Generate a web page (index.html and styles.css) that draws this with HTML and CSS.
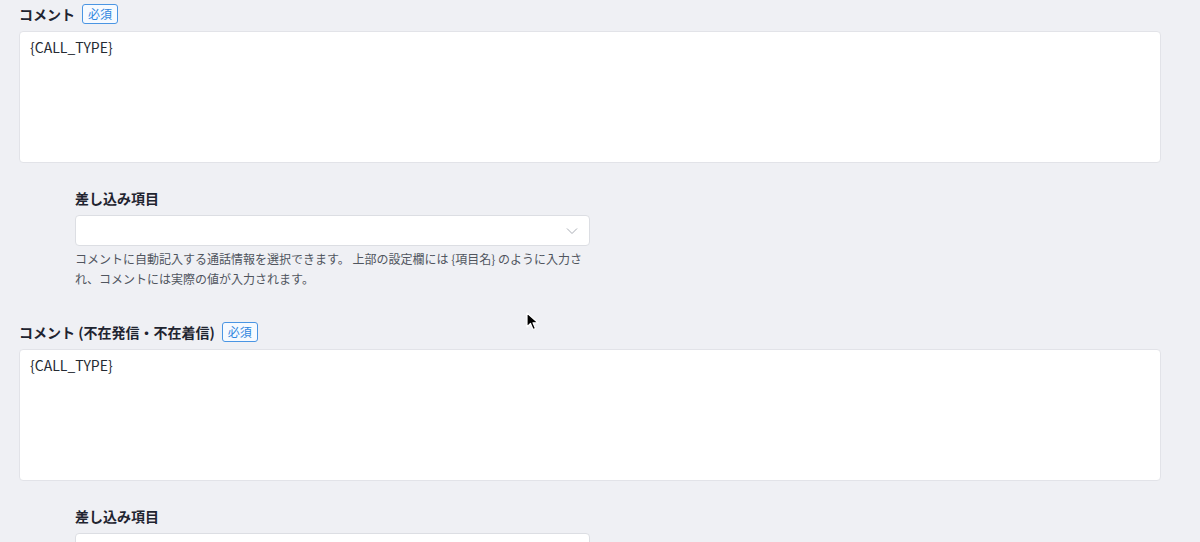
FILE: index.html
```html
<!DOCTYPE html>
<html>
  <head>
    <title>コメント設定</title>
    <link rel="stylesheet" href="styles.css">
  </head>
  <body>
    <div class="page">

      <div class="field">
        <div class="field_title">
          <span>コメント</span>
          <span class="badge">必須</span>
        </div>
        <div class="textarea">{CALL_TYPE}</div>
      </div>

      <div class="insert">
        <div class="insert_label">差し込み項目</div>
        <div class="select">
          <svg class="chevron" width="12" height="8" viewBox="0 0 12 8"><path d="M1 1.5 L6 6.5 L11 1.5" fill="none" stroke="#a9adb5" stroke-width="1"/></svg>
        </div>
        <p class="help">コメントに自動記入する通話情報を選択できます。 上部の設定欄には {項目名} のように入力され、コメントには実際の値が入力されます。</p>
      </div>

      <div class="field">
        <div class="field_title">
          <span>コメント (不在発信・不在着信)</span>
          <span class="badge">必須</span>
        </div>
        <div class="textarea">{CALL_TYPE}</div>
      </div>

      <div class="insert">
        <div class="insert_label">差し込み項目</div>
        <div class="select">
          <svg class="chevron" width="12" height="8" viewBox="0 0 12 8"><path d="M1 1.5 L6 6.5 L11 1.5" fill="none" stroke="#a9adb5" stroke-width="1"/></svg>
        </div>
      </div>

    </div>

    <!-- mouse pointer -->
    <svg class="pointer" width="14" height="20" viewBox="0 0 14 20">
      <path d="M1 1 L1 15 L4.5 11.5 L7 17.5 L9.5 16.5 L7 10.8 L12 10.8 Z" fill="#000" stroke="#fff" stroke-width="1.2" stroke-linejoin="round"/>
    </svg>
  </body>
</html>
```

FILE: styles.css
```css
* {
  padding: 0;
  margin: 0;
  box-sizing: border-box;
  font-family: "Noto Sans CJK JP", "Noto Sans", sans-serif;
}

body {
  background: #eff0f4;
  color: #1f2430;
  overflow: hidden;
}

.page {
  padding: 4px 39px 0 19px;
}

.field_title {
  display: flex;
  align-items: center;
  gap: 7px;
  height: 20px;
  font-size: 14px;
  font-weight: 700;
}

.badge {
  font-size: 12px;
  font-weight: 400;
  color: #2f86de;
  background: #f6faff;
  border: 1px solid #4a95e3;
  border-radius: 3px;
  padding: 0 5px;
  line-height: 18px;
}

.textarea {
  margin-top: 7px;
  height: 132px;
  background: #fff;
  border: 1px solid #e2e3e8;
  border-radius: 4px;
  padding: 5px 10px;
  font-size: 14px;
  line-height: 20px;
  color: #252a33;
}

.insert {
  margin: 25px 0 0 56px;
  width: 515px;
  padding-bottom: 33px;
}

.insert_label {
  font-size: 14px;
  font-weight: 700;
  line-height: 20px;
}

.select {
  margin-top: 7px;
  height: 31px;
  background: #fff;
  border: 1px solid #dcdee3;
  border-radius: 4px;
  display: flex;
  align-items: center;
  justify-content: flex-end;
  padding-right: 11px;
}

.help {
  margin-top: 3px;
  font-size: 12px;
  line-height: 20px;
  color: #50555e;
}

.pointer {
  position: absolute;
  left: 526px;
  top: 312px;
}
```
